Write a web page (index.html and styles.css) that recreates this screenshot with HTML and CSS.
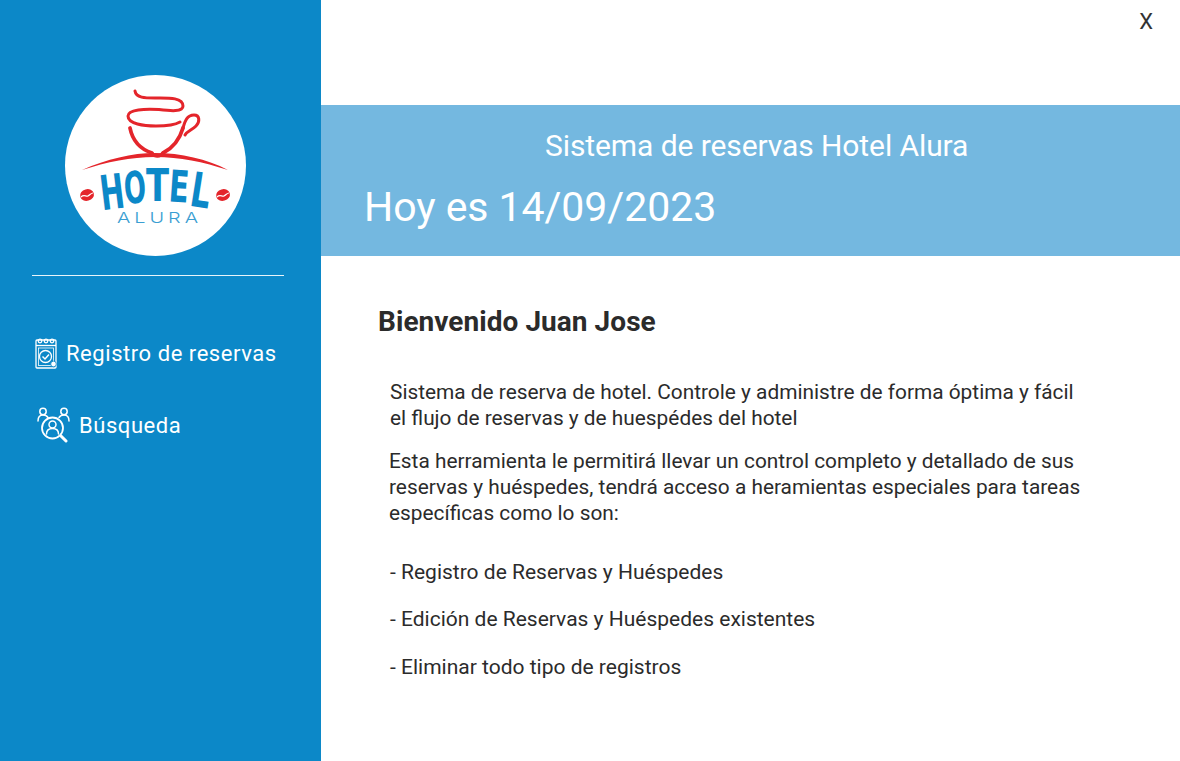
FILE: index.html
```html
<!DOCTYPE html>
<html lang="es">
<head>
<meta charset="utf-8">
<title>Hotel Alura</title>
<link rel="stylesheet" href="styles.css">
</head>
<body>
<div class="app">
  <aside class="sidebar">
    <div class="logo">
      <svg viewBox="0 0 181 181" width="181" height="181">
        <circle cx="90.5" cy="90.5" r="90.5" fill="#fff"/>
        <g fill="none" stroke="#e4252b" stroke-linecap="round">
          <path d="M70 16c1 7 10 7 20 7 12 0 28-1 28 8 0 6-12 5-24 3.500-14-1-31 0-31 6.500 0 8 16 10 28 10 12 0 19-1 24-4" stroke-width="3"/>
          <path d="M65 53c2 10 7 20 22 25M118 53c-3 10-8 19-20 25" stroke-width="3.800"/>
          <path d="M118 53c2-7 4-13 11-13 6 0 6 7 2 11-4 4-9 5-11 9" stroke-width="3"/>
          <path d="M86 78c4 4 9 4 12 0" stroke-width="3.500"/>
        </g>
        <path d="M17 95c25-11 50-17 73-17 26 0 52 6 73 17-25-8-48-13-73-13-24 0-48 5-73 13z" fill="#e4252b"/>
        <g fill="#e4252b">
          <ellipse cx="22" cy="120" rx="7" ry="5.800" transform="rotate(-15 22 120)"/>
          <ellipse cx="158" cy="120" rx="7" ry="5.800" transform="rotate(-15 158 120)"/>
        </g>
        <path d="M16 122c3-3 5 0 7-1s3-3 5-3M152 122c3-3 5 0 7-1s3-3 5-3" fill="none" stroke="#fff" stroke-width="1.200"/>
        <g class="logo-word">
          <text class="logo-tall" x="35" y="134" transform="rotate(-7 46 116)" textLength="24" lengthAdjust="spacingAndGlyphs">H</text>
          <text x="59" y="128" transform="rotate(-4 69 113)" textLength="22" lengthAdjust="spacingAndGlyphs">O</text>
          <text x="81" y="126" textLength="23" lengthAdjust="spacingAndGlyphs">T</text>
          <text x="104" y="127" transform="rotate(4 113 112)" textLength="20" lengthAdjust="spacingAndGlyphs">E</text>
          <text class="logo-tall" x="126" y="132" transform="rotate(9 134 115)" textLength="20" lengthAdjust="spacingAndGlyphs">L</text>
        </g>
        <text class="logo-sub" x="94.500" y="148" textLength="85" lengthAdjust="spacingAndGlyphs" text-anchor="middle">ALURA</text>
      </svg>
    </div>
    <hr class="divider">
    <nav class="nav">
      <a class="nav-item">
        <svg class="nav-icon" viewBox="0 0 24 32" width="24" height="32" fill="none" stroke="#fff" stroke-width="1.300">
          <rect x="2" y="3" width="20" height="28" rx="1"/>
          <path d="M2 8.500h20"/>
          <circle cx="6" cy="4" r="1.800"/><circle cx="12" cy="4" r="1.800"/><circle cx="18" cy="4" r="1.800"/>
          <rect x="4.500" y="11" width="15" height="17.500" stroke-width=".8"/>
          <circle cx="11.500" cy="19.500" r="6"/>
          <path d="M8.500 19.500l2.500 2.500 4-4.500" stroke-width="1.500"/>
          <circle cx="19.500" cy="27" r="2.800" fill="#fff" stroke="#0c88c8" stroke-width=".8"/>
        </svg>
        <span>Registro de reservas</span>
      </a>
      <a class="nav-item nav-item-second">
        <svg class="nav-icon" viewBox="0 0 34 36" width="34" height="36" fill="none" stroke="#fff" stroke-width="1.500" stroke-linecap="round">
          <circle cx="6" cy="4.500" r="3.200"/>
          <path d="M1 14c0-3 1-6 5-6 2.500 0 4 1 5 2.500"/>
          <circle cx="27" cy="4.500" r="3.200"/>
          <path d="M32 14c0-3-1-6-5-6-2.500 0-4 1-5 2.500"/>
          <circle cx="15.500" cy="21" r="10.500" stroke-width="1.800"/>
          <circle cx="15.500" cy="17.500" r="3.500"/>
          <path d="M9.500 27c0-3.500 2.500-5.500 6-5.500s6 2 6 5.500"/>
          <path d="M24 29l5 5" stroke-width="3"/>
        </svg>
        <span>Búsqueda</span>
      </a>
    </nav>
  </aside>
  <main class="main">
    <div class="topbar"><span class="close">X</span></div>
    <header class="banner">
      <h1 class="banner-title">Sistema de reservas Hotel Alura</h1>
      <p class="banner-date">Hoy es 14/09/2023</p>
    </header>
    <section class="content">
      <h2 class="welcome">Bienvenido Juan Jose</h2>
      <div class="copy">
        <p class="para">Sistema de reserva de hotel. Controle y administre de forma óptima y fácil<br>el flujo de reservas y de huespédes del hotel</p>
        <p class="para para-second">Esta herramienta le permitirá llevar un control completo y detallado de sus<br>reservas y huéspedes, tendrá acceso a heramientas especiales para tareas<br>específicas como lo son:</p>
        <ul class="list">
          <li>- Registro de Reservas y Huéspedes</li>
          <li>- Edición de Reservas y Huéspedes existentes</li>
          <li>- Eliminar todo tipo de registros</li>
        </ul>
      </div>
    </section>
  </main>
</div>
</body>
</html>
```
FILE: styles.css
```css
* { box-sizing: border-box; }
html, body { margin: 0; padding: 0; }
body {
  font-family: Roboto, "Liberation Sans", sans-serif;
  color: #2b2b2b;
  background: #fff;
}
.app { display: flex; height: 761px; overflow: hidden; }

.sidebar {
  width: 321px;
  flex: none;
  background: #0c88c8;
  padding: 75px 37px 0 32px;
  color: #fff;
}
.logo { display: flex; margin-left: 33px; }
.logo svg { display: block; }
.logo-word text {
  font-family: "DejaVu Sans", sans-serif;
  font-weight: 700;
  font-size: 44px;
  fill: #0c88c8;
}
.logo-word .logo-tall { font-size: 48px; }
.logo-sub {
  font-family: Inter, "Liberation Sans", sans-serif;
  font-weight: 300;
  font-size: 15px;
  fill: #3a9ed2;
  letter-spacing: 3px;
}
.divider {
  border: 0;
  border-top: 1px solid #e8f4fa;
  margin: 19px 0 0;
  width: 252px;
}
.nav { display: flex; flex-direction: column; margin-top: 61px; }
.nav-item {
  display: flex;
  align-items: center;
  font-size: 22px;
  letter-spacing: .55px;
  height: 32px;
  padding-left: 2px;
  gap: 8px;
}
.nav-item-second { margin-top: 40px; padding-left: 5px; gap: 8px; }
.nav-icon { flex: none; }

.main { flex: 1; display: flex; flex-direction: column; min-width: 0; }
.topbar {
  height: 105px;
  display: flex;
  justify-content: flex-end;
  padding: 9px 27px 0 0;
}
.close { font-size: 22px; line-height: 26px; color: #333; }
.banner {
  height: 151px;
  background: #74b8e0;
  color: #fff;
  padding: 22px 0 0 43px;
}
.banner-title {
  margin: 0;
  font-size: 30px;
  letter-spacing: -.09px;
  line-height: 38px;
  font-weight: 400;
  padding-left: 181px;
}
.banner-date {
  margin: 19px 0 0;
  font-size: 41px;
  letter-spacing: -.06px;
  line-height: 47px;
}
.content { padding: 50px 0 0 57px; }
.welcome {
  margin: 0;
  font-size: 28px;
  letter-spacing: .05px;
  line-height: 32px;
  font-weight: 700;
  color: #2b2b2b;
}
.copy { margin-top: 41px; padding-left: 12px; font-size: 20.850px; line-height: 26px; }
.para { margin: 0; }
.para-second { margin: 17px 0 0 -1px; }
.list { list-style: none; margin: 32.500px 0 0; padding: 0; font-size: 21px; }
.list li { height: 47.500px; }
```
